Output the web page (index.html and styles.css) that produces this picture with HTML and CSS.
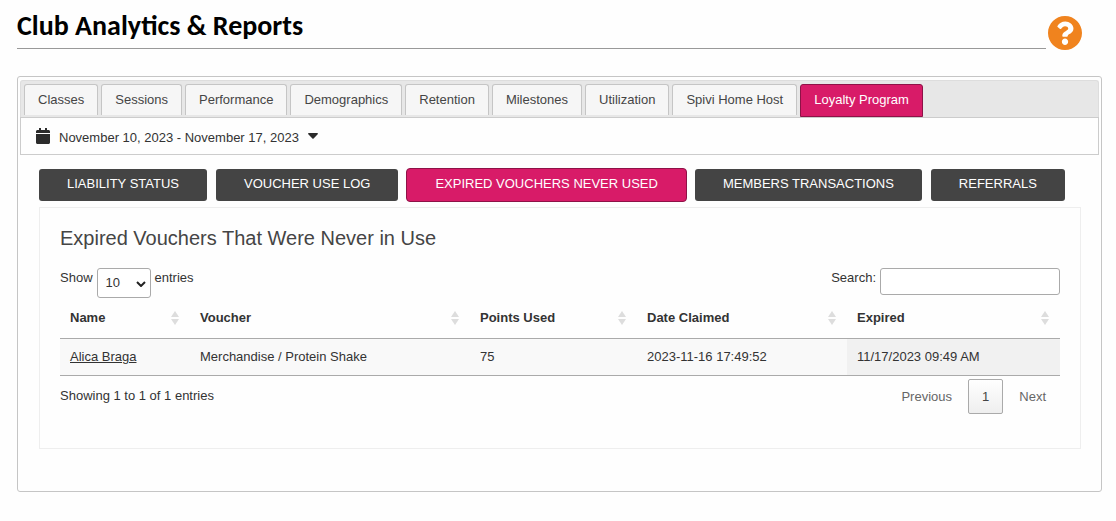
FILE: index.html
```html
<!DOCTYPE html>
<html lang="en">
<head>
<meta charset="utf-8">
<title>Club Analytics &amp; Reports</title>
<link rel="stylesheet" href="styles.css">
</head>
<body>
<header class="page-header">
  <h1 class="page-title">Club Analytics &amp; Reports</h1>
  <button class="help" type="button" aria-label="Help">
    <svg viewBox="8 8 496 496" width="34" height="34" aria-hidden="true">
      <path fill="#f0831e" d="M504 256c0 136.997-111.043 248-248 248S8 392.997 8 256C8 119.083 119.043 8 256 8s248 111.083 248 248zM262.655 90c-54.497 0-89.255 22.957-116.549 63.758-3.536 5.286-2.353 12.415 2.715 16.258l34.699 26.310c5.205 3.947 12.621 3.008 16.665-2.122 17.864-22.658 30.113-35.797 57.303-35.797 20.429 0 45.698 13.148 45.698 32.958 0 14.976-12.363 22.667-32.534 33.976C247.128 238.528 216 254.941 216 296v4c0 6.627 5.373 12 12 12h56c6.627 0 12-5.373 12-12v-1.333c0-28.462 83.186-29.647 83.186-106.667 0-58.002-60.165-102-116.531-102zM256 338c-25.365 0-46 20.635-46 46 0 25.364 20.635 46 46 46s46-20.636 46-46c0-25.365-20.635-46-46-46z"/>
    </svg>
  </button>
</header>
<main class="panel">
  <nav class="tabs">
    <a class="tab" href="#">Classes</a>
    <a class="tab" href="#">Sessions</a>
    <a class="tab" href="#">Performance</a>
    <a class="tab" href="#">Demographics</a>
    <a class="tab" href="#">Retention</a>
    <a class="tab" href="#">Milestones</a>
    <a class="tab" href="#">Utilization</a>
    <a class="tab" href="#">Spivi Home Host</a>
    <a class="tab tab-active" href="#" aria-current="page">Loyalty Program</a>
  </nav>
  <button class="date-range" type="button">
    <svg viewBox="0 0 14 16" width="14" height="16" aria-hidden="true"><path fill="#2b2b2b" d="M0 5V3.500C0 2.700.7 2 1.500 2H3V.4C3 .2 3.200 0 3.400 0h1.200c.2 0 .4.200.4.400V2h4V.4c0-.2.200-.4.400-.4h1.200c.2 0 .4.200.4.400V2h1.500c.8 0 1.500.7 1.500 1.500V5zM0 6h14v8.500c0 .8-.7 1.500-1.500 1.500h-11C.7 16 0 15.300 0 14.500z"/></svg>
    <span class="date-text">November 10, 2023 - November 17, 2023</span>
    <svg viewBox="0 0 10 6" width="10" height="6" aria-hidden="true"><path fill="#2b2b2b" d="M.8 0h8.400c.7 0 1 .8.500 1.200L5.600 5.500c-.3.300-.9.300-1.200 0L.3 1.200C-.2.800.1 0 .8 0z"/></svg>
  </button>
  <div class="reports">
    <button class="report" type="button">LIABILITY STATUS</button>
    <button class="report" type="button">VOUCHER USE LOG</button>
    <button class="report report-active" type="button">EXPIRED VOUCHERS NEVER USED</button>
    <button class="report" type="button">MEMBERS TRANSACTIONS</button>
    <button class="report" type="button">REFERRALS</button>
  </div>
  <section class="card">
    <h2 class="card-title">Expired Vouchers That Were Never in Use</h2>
    <div class="controls">
      <label class="control">Show
        <span class="select-wrap">
          <select class="length"><option>10</option><option>25</option><option>50</option></select>
          <svg class="chevron" viewBox="0 0 10 6" width="10" height="6" aria-hidden="true"><path d="M1 1l4 4 4-4" fill="none" stroke="#222" stroke-width="2"/></svg>
        </span>
        entries</label>
      <label class="control">Search: <input class="search" type="search"></label>
    </div>
    <table class="data">
      <colgroup><col class="c-name"><col class="c-voucher"><col class="c-points"><col class="c-claimed"><col class="c-expired"></colgroup>
      <thead>
        <tr><th><div class="head">Name<i class="sort"></i></div></th><th><div class="head">Voucher<i class="sort"></i></div></th><th><div class="head">Points Used<i class="sort"></i></div></th><th><div class="head">Date Claimed<i class="sort"></i></div></th><th><div class="head">Expired<i class="sort"></i></div></th></tr>
      </thead>
      <tbody>
        <tr><td><a class="member" href="#">Alica Braga</a></td><td>Merchandise / Protein Shake</td><td>75</td><td>2023-11-16 17:49:52</td><td class="sorted">11/17/2023 09:49 AM</td></tr>
      </tbody>
    </table>
    <div class="footer">
      <div class="info">Showing 1 to 1 of 1 entries</div>
      <div class="pager">
        <button class="page" type="button">Previous</button>
        <button class="page page-current" type="button">1</button>
        <button class="page" type="button">Next</button>
      </div>
    </div>
  </section>
</main>
</body>
</html>
```
FILE: styles.css
```css
* { box-sizing: border-box; }
body {
  margin: 0;
  padding: 8px 14px 29px 17px;
  background: #fefefe;
  color: #333;
  font: 13px/20px "Liberation Sans", Arial, sans-serif;
}
button, input, select { font: inherit; color: inherit; }
button { cursor: pointer; }

.page-header {
  display: flex;
  align-items: flex-start;
  gap: 2px;
  padding-right: 20px;
  margin-bottom: 26px;
}
.page-title {
  flex: 1;
  margin: 0;
  padding-bottom: 4px;
  border-bottom: 1px solid #999;
  color: #000;
  font: bold 28px/36px Carlito, Calibri, Lato, sans-serif;
}
.help {
  display: flex;
  margin: 8px 0 0;
  padding: 0;
  border: 0;
  background: none;
}

.panel {
  padding: 3px 2px 42px;
  border: 1px solid #c5c5c5;
  border-radius: 3px;
}
.tabs {
  display: flex;
  align-items: flex-start;
  gap: 3px;
  padding: 3px 3px 0;
  border: 1px solid #ddd;
  border-bottom: 0;
  border-radius: 3px 3px 0 0;
  background: #e7e7e7;
}
.tab {
  height: 31px;
  margin-bottom: 2px;
  padding: 5px 13px;
  border: 1px solid #c5c5c5;
  border-bottom: 0;
  border-radius: 3px 3px 0 0;
  background: #f6f6f6;
  color: #454545;
  text-decoration: none;
  white-space: nowrap;
}
.tab-active {
  height: 33px;
  margin-bottom: 0;
  border: 1px solid #8e1247;
  background: #d81b68;
  color: #fff;
}
.date-range {
  display: flex;
  align-items: center;
  gap: 9px;
  width: 100%;
  height: 38px;
  padding: 0 15px;
  border: 1px solid #ccc;
  background: #fefefe;
}
.date-text { padding-top: 3px; }

.reports {
  display: flex;
  gap: 7px;
  padding: 13px 18px 5px;
}
.report {
  height: 34px;
  padding: 0 28px 2px;
  border: 1px solid transparent;
  border-radius: 4px;
  background: #444;
  background-clip: padding-box;
  color: #fff;
  white-space: nowrap;
}
.report-active { border-color: #8e1247; background: #d81b68; }

.card {
  margin: 0 18px 0 19px;
  padding: 18px 20px 34px;
  border: 1px solid #eee;
}
.card-title {
  margin: 0;
  color: #454545;
  font-size: 20px;
  font-weight: normal;
  line-height: 24px;
}
.controls {
  display: flex;
  justify-content: space-between;
  margin-top: 18px;
  height: 30px;
}
.control { display: flex; gap: 4px; }
.select-wrap { position: relative; }
.length {
  appearance: none;
  width: 54px;
  height: 30px;
  padding: 0 8px;
  border: 1px solid #aaa;
  border-radius: 3px;
  background: #fff;
}
.chevron {
  position: absolute;
  top: 13px;
  right: 5px;
  pointer-events: none;
}
.search {
  width: 180px;
  height: 27px;
  padding: 4px;
  border: 1px solid #aaa;
  border-radius: 3px;
  background: #fff;
}

.data {
  width: 100%;
  border-collapse: separate;
  border-spacing: 0;
  border-bottom: 1px solid #aaa;
  table-layout: fixed;
}
.c-name { width: 130px; }
.c-voucher { width: 28%; }
.c-points { width: 167px; }
.c-claimed { width: 21%; }
.c-expired { width: auto; }
.data th {
  padding: 10px 11px 10px 10px;
  border-bottom: 1px solid #aaa;
  text-align: left;
}
.data td { padding: 8px 10px; background: #f9f9f9; }
.data .sorted { background: #f1f1f1; }
.head {
  display: flex;
  align-items: center;
  justify-content: space-between;
}
.sort { display: grid; gap: 2px; }
.sort::before, .sort::after {
  content: "";
  border: solid transparent;
  border-width: 0 4px;
}
.sort::before { border-bottom: 6px solid #ddd; }
.sort::after { border-top: 6px solid #ddd; }
.member { color: inherit; }

.footer {
  display: flex;
  justify-content: space-between;
  padding-top: 3px;
}
.info { padding-top: 7px; }
.pager { display: flex; gap: 2px; }
.page {
  height: 35px;
  padding: 0 13px;
  border: 1px solid transparent;
  border-radius: 2px;
  background: none;
  color: #666;
}
.page-current {
  border-color: #aaa;
  background: linear-gradient(#fff, #eee);
  color: #444;
}
```
